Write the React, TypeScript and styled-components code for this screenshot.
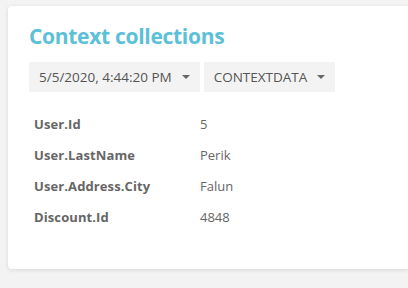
import React from "react";
import styled, { createGlobalStyle } from "styled-components";

const Global = createGlobalStyle`
  html, body { margin: 0; padding: 0; background: #f3f3f3; }
  body { font-family: "Open Sans", "Noto Sans", sans-serif; overflow: hidden; }
`;

const Page = styled.div`
  padding: 6px 0 0 8px;
  width: 408px;
  height: 288px;
  box-sizing: border-box;
`;

const Card = styled.div`
  background: #fff;
  border-radius: 4px 0 0 4px;
  box-shadow: 0 1px 4px rgba(0, 0, 0, 0.12);
  height: 263px;
  box-sizing: border-box;
  padding: 14px 0 0 21px;
`;

const Title = styled.h1`
  margin: 0;
  font-size: 21px;
  font-weight: 700;
  color: #5bc0d8;
  line-height: 32px;
  letter-spacing: -0.3px;
`;

const Toolbar = styled.div`
  display: flex;
  gap: 4px;
  margin-top: 10px;
`;

const Dropdown = styled.button`
  display: flex;
  align-items: center;
  gap: 10px;
  height: 30px;
  padding: 0 10px;
  border: none;
  background: #f3f3f3;
  color: #555;
  font-family: inherit;
  font-size: 13.5px;
  cursor: pointer;
`;

const Caret = styled.span`
  width: 0;
  height: 0;
  border-left: 4px solid transparent;
  border-right: 4px solid transparent;
  border-top: 4px solid #666;
`;

const Table = styled.div`
  display: grid;
  grid-template-columns: 166px auto;
  grid-auto-rows: 31px;
  align-items: center;
  margin: 16px 0 0 5px;
`;

const Label = styled.div`
  font-size: 13px;
  font-weight: 700;
  color: #666;
  letter-spacing: 0.1px;
`;

const Value = styled.div`
  font-size: 13px;
  color: #666;
`;

const rows: [string, string][] = [
  ["User.Id", "5"],
  ["User.LastName", "Perik"],
  ["User.Address.City", "Falun"],
  ["Discount.Id", "4848"],
];

export default function App() {
  return (
    <>
      <Global />
      <Page>
        <Card>
          <Title>Context collections</Title>
          <Toolbar>
            <Dropdown>
              5/5/2020, 4:44:20 PM <Caret />
            </Dropdown>
            <Dropdown>
              CONTEXTDATA <Caret />
            </Dropdown>
          </Toolbar>
          <Table>
            {rows.map(([k, v]) => (
              <React.Fragment key={k}>
                <Label>{k}</Label>
                <Value>{v}</Value>
              </React.Fragment>
            ))}
          </Table>
        </Card>
      </Page>
    </>
  );
}
